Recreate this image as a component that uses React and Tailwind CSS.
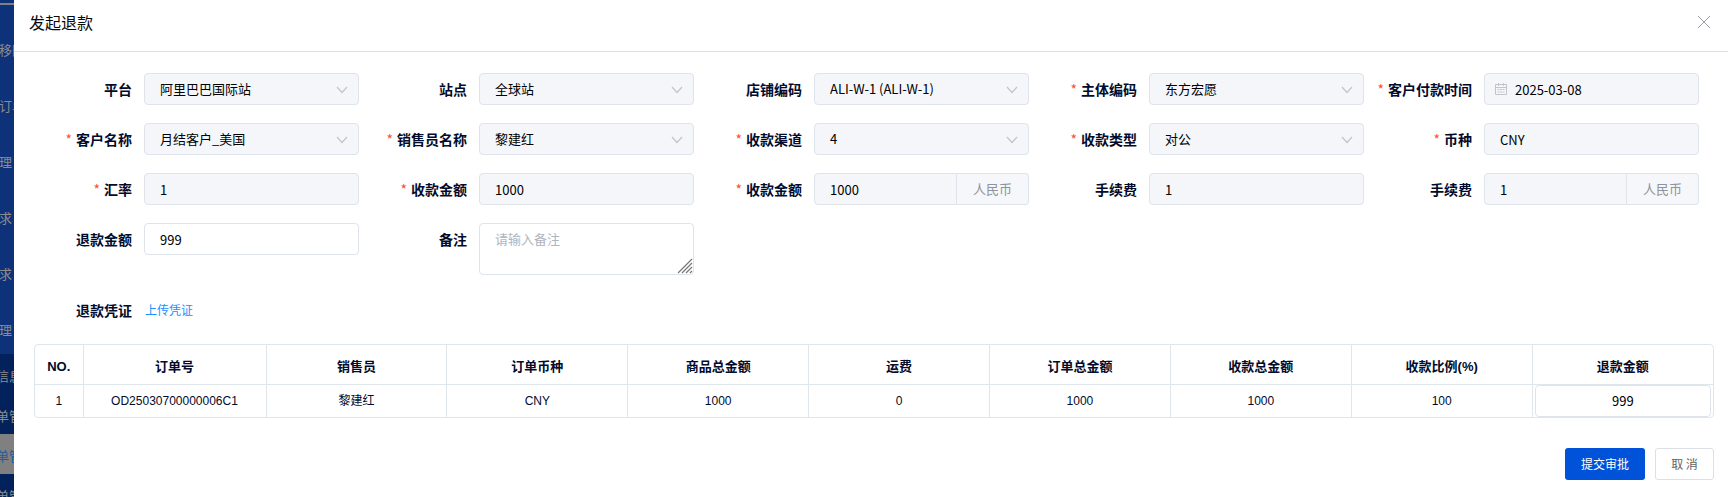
import React, { useState } from 'react';

const fieldClass =
  'block h-8 w-full rounded border border-[#dfe3ec] px-[15px] text-[13px] text-black outline-none placeholder:text-[#b0b4bd]';
const disabledClass = 'bg-[#f4f6fa] disabled:opacity-100';

const menus = ['移除', '订单', '理', '求', '求', '理'];
const subMenus = [
  { name: '信息' },
  { name: '单管' },
  { name: '单管', active: true },
  { name: '单管' },
];

const fields = [
  { id: 'platform', label: '平台', type: 'select', value: '阿里巴巴国际站' },
  { id: 'site', label: '站点', type: 'select', value: '全球站' },
  { id: 'shop', label: '店铺编码', type: 'select', value: 'ALI-W-1 (ALI-W-1)' },
  { id: 'company', label: '主体编码', type: 'select', value: '东方宏愿', required: true },
  { id: 'payTime', label: '客户付款时间', type: 'date', value: '2025-03-08', required: true },
  { id: 'customer', label: '客户名称', type: 'select', value: '月结客户_美国', required: true },
  { id: 'seller', label: '销售员名称', type: 'select', value: '黎建红', required: true },
  { id: 'channel', label: '收款渠道', type: 'select', value: '4', required: true },
  { id: 'payType', label: '收款类型', type: 'select', value: '对公', required: true },
  { id: 'currency', label: '币种', type: 'text', value: 'CNY', required: true },
  { id: 'rate', label: '汇率', type: 'text', value: '1', required: true },
  { id: 'amount', label: '收款金额', type: 'text', value: '1000', required: true },
  { id: 'amountCny', label: '收款金额', type: 'group', value: '1000', unit: '人民币', required: true },
  { id: 'fee', label: '手续费', type: 'text', value: '1' },
  { id: 'feeCny', label: '手续费', type: 'group', value: '1', unit: '人民币' },
];

const columns = ['订单号', '销售员', '订单币种', '商品总金额', '运费', '订单总金额', '收款总金额', '收款比例(%)', '退款金额'];
const orders = [['OD25030700000006C1', '黎建红', 'CNY', '1000', '0', '1000', '1000', '100']];

const ChevronIcon = () => (
  <svg viewBox="0 0 12 8" className="pointer-events-none absolute top-[13px] right-[11px] h-2 w-3" fill="none" stroke="#c0c4cc" strokeWidth="1.2">
    <path d="M1 1l5 5.5L11 1" />
  </svg>
);

const CalendarIcon = () => (
  <svg viewBox="0 0 12 12" className="pointer-events-none absolute top-[10px] left-[11px] h-3 w-3" fill="none" stroke="#c0c4cc">
    <path d="M.5 1.5h11v10H.5zM.5 4.5h11M3.5 0v3M8.5 0v3" />
    <path d="M2.5 6.5h7M2.5 9h7" strokeDasharray="2 .6" />
  </svg>
);

const FormItem = ({ id, label, required, children }) => (
  <div className="flex items-start">
    <label htmlFor={id} className="w-[120px] shrink-0 pr-3 text-right text-sm leading-8 font-bold whitespace-nowrap text-[#020b2c]">
      {required && <span className="mr-1 font-normal text-[#ff4d2f]">*</span>}
      {label}
    </label>
    <div className="relative min-w-0 flex-1">{children}</div>
  </div>
);

const Field = ({ field }) => {
  const { id, type, value, unit } = field;

  if (type === 'select') {
    return (
      <>
        <select id={id} disabled className={`${fieldClass} ${disabledClass} appearance-none`}>
          <option>{value}</option>
        </select>
        <ChevronIcon />
      </>
    );
  }

  if (type === 'date') {
    return (
      <>
        <input id={id} type="text" disabled defaultValue={value} className={`${fieldClass} ${disabledClass} pl-[30px]`} />
        <CalendarIcon />
      </>
    );
  }

  if (type === 'group') {
    return (
      <div className="flex">
        <input id={id} type="text" disabled defaultValue={value} className={`${fieldClass} ${disabledClass} min-w-0 flex-1 rounded-r-none`} />
        <span className="w-[72px] rounded-r border border-l-0 border-[#dfe3ec] bg-[#f5f7fa] text-center text-[13px] leading-[30px] text-[#909399]">
          {unit}
        </span>
      </div>
    );
  }

  return <input id={id} type="text" disabled defaultValue={value} className={`${fieldClass} ${disabledClass}`} />;
};

const Sidebar = () => (
  <aside className="w-[14px] shrink-0 overflow-hidden bg-[#0e3279] text-[13px] whitespace-nowrap text-[#8c8c8c]">
    <div className="h-[22px] pt-[3px]">
      <div className="h-[2px] bg-[#808080]" />
    </div>
    <ul>
      {menus.map((name, i) => (
        <li key={i} className="h-14 leading-[56px]">
          <span className="-ml-px">{name}</span>
        </li>
      ))}
    </ul>
    <ul className="-mt-1 bg-[#03225c]">
      {subMenus.map((item, i) => (
        <li key={i} className={`h-10 leading-[44px] ${item.active ? 'bg-[#808080] text-[#1f5c9c]' : ''}`}>
          <span className="-ml-1">{item.name}</span>
        </li>
      ))}
    </ul>
  </aside>
);

const App = () => {
  const [refund, setRefund] = useState('999');
  const [remark, setRemark] = useState('');
  const [orderRefund, setOrderRefund] = useState('999');

  return (
    <div className="flex h-screen overflow-hidden font-['Noto_Sans_CJK_SC',sans-serif]">
      <Sidebar />

      <main className="min-w-0 flex-1 overflow-auto bg-white">
        <header className="flex h-[52px] items-center justify-between border-b border-[#dcdfee] pr-[17px] pb-2 pl-[15px]">
          <h1 className="text-base text-[#06090f]">发起退款</h1>
          <button type="button" aria-label="关闭">
            <svg viewBox="0 0 14 14" className="h-[14px] w-[14px]" stroke="#9a9da4">
              <path d="M1 1l12 12M13 1L1 13" />
            </svg>
          </button>
        </header>

        <form className="pt-[21px]" onSubmit={(e) => e.preventDefault()}>
          <div className="grid grid-cols-5 gap-y-[18px] pr-[29px] pl-[10px]">
            {fields.map((field) => (
              <FormItem key={field.id} id={field.id} label={field.label} required={field.required}>
                <Field field={field} />
              </FormItem>
            ))}
            <FormItem id="refund" label="退款金额">
              <input id="refund" type="text" value={refund} onChange={(e) => setRefund(e.target.value)} className={fieldClass} />
            </FormItem>
            <FormItem id="remark" label="备注">
              <textarea
                id="remark"
                placeholder="请输入备注"
                value={remark}
                onChange={(e) => setRemark(e.target.value)}
                className="block h-[52px] w-full resize-none rounded border border-[#dfe3ec] px-[15px] py-[5px] text-[13px] leading-5 outline-none placeholder:text-[#b0b4bd]"
              />
              <svg viewBox="0 0 16 16" className="pointer-events-none absolute right-[1px] bottom-[1px] h-4 w-4" stroke="#777" strokeWidth="1.2">
                <path d="M1 15L15 1M5 15L15 5M9 15L15 9M13 15L15 13" />
              </svg>
            </FormItem>
          </div>

          <div className="mt-[25px] flex items-center pl-[10px] leading-8">
            <span className="w-[120px] pr-3 text-right text-sm font-bold text-[#020b2c]">退款凭证</span>
            <a href="#upload" className="ml-px text-xs text-[#1890ff]">上传凭证</a>
          </div>

          <div className="mt-6 mr-[14px] ml-5 overflow-hidden rounded border border-[#dfe6ec]">
            <table className="w-full table-fixed text-center text-xs text-[#020b2c] font-['Liberation_Sans','Noto_Sans_CJK_SC',sans-serif]">
              <colgroup>
                <col className="w-12" />
                <col className="w-[183px]" />
              </colgroup>
              <thead>
                <tr className="h-[39px] border-b border-[#dfe6ec] text-[13px]">
                  <th className="border-r border-[#dfe6ec] pt-1">NO.</th>
                  {columns.map((name) => (
                    <th key={name} className="border-r border-[#dfe6ec] pt-1 last:border-r-0">{name}</th>
                  ))}
                </tr>
              </thead>
              <tbody>
                {orders.map((order, i) => (
                  <tr key={order[0]} className="h-8">
                    <td className="border-r border-[#dfe6ec]">{i + 1}</td>
                    {order.map((cell, j) => (
                      <td key={j} className="border-r border-[#dfe6ec]">{cell}</td>
                    ))}
                    <td className="px-[2px]">
                      <input
                        type="text"
                        aria-label="退款金额"
                        value={orderRefund}
                        onChange={(e) => setOrderRefund(e.target.value)}
                        className={`${fieldClass} text-center font-['Noto_Sans_CJK_SC',sans-serif]`}
                      />
                    </td>
                  </tr>
                ))}
              </tbody>
            </table>
          </div>

          <div className="mt-[30px] mr-[14px] flex justify-end gap-[10px] text-xs">
            <button type="submit" className="h-8 w-20 rounded-[3px] bg-[#0052d9] text-white">提交审批</button>
            <button type="button" className="h-8 w-[59px] rounded-[3px] border border-[#dcdfe6] text-[#606266]">取 消</button>
          </div>
        </form>
      </main>
    </div>
  );
};

export default App;
